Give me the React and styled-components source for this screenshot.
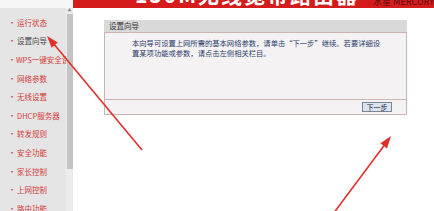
import React from "react";
import styled, { createGlobalStyle } from "styled-components";

const GlobalStyle = createGlobalStyle`
  html, body {
    margin: 0;
    padding: 0;
    width: 434px;
    height: 211px;
    overflow: hidden;
    background: #fff;
    font-family: "Noto Sans CJK SC", "Liberation Sans", sans-serif;
  }
`;

const menu = [
  { label: "运行状态" },
  { label: "设置向导", active: true },
  { label: "WPS一键安全设定" },
  { label: "网络参数" },
  { label: "无线设置" },
  { label: "DHCP服务器" },
  { label: "转发规则" },
  { label: "安全功能" },
  { label: "家长控制" },
  { label: "上网控制" },
  { label: "路由功能" },
];

const App = () => {
  return (
    <Page>
      <GlobalStyle />
      <TopRow>
        <TopLeft />
        <Banner>
          <Title>150M无线宽带路由器</Title>
          <Brand>水星 MERCURY</Brand>
        </Banner>
      </TopRow>
      <Body>
        <Sidebar>
          {menu.map((m) => (
            <MenuItem key={m.label} $active={m.active}>
              <Dot>•</Dot>
              {m.label}
            </MenuItem>
          ))}
        </Sidebar>
        <ScrollTrack>
          <ScrollArrow>▲</ScrollArrow>
          <ScrollThumb />
        </ScrollTrack>
        <Main>
          <Panel>
            <PanelHead>设置向导</PanelHead>
            <PanelBody>
              本向导可设置上网所需的基本网络参数，请单击“下一步”继续。若要详细设
              <br />
              置某项功能或参数，请点击左侧相关栏目。
            </PanelBody>
            <PanelFoot>
              <NextButton>下一步</NextButton>
            </PanelFoot>
          </Panel>
        </Main>
      </Body>
      <Arrows width="434" height="211" viewBox="0 0 434 211">
        <line x1="142" y1="150" x2="53" y2="43" stroke="#e0302c" strokeWidth="1.6" />
        <polygon points="47,36 57.8,42.6 51.6,47.8" fill="#e0302c" />
        <line x1="333" y1="214" x2="386" y2="143" stroke="#e0302c" strokeWidth="1.6" />
        <polygon points="391,136 387,148.5 380.4,143.2" fill="#e0302c" />
      </Arrows>
    </Page>
  );
};

const Page = styled.div`
  position: relative;
  width: 434px;
  height: 211px;
  display: flex;
  flex-direction: column;
  overflow: hidden;
`;

const TopRow = styled.div`
  display: flex;
  height: 8px;
  flex-shrink: 0;
`;

const TopLeft = styled.div`
  width: 73px;
  background: #f6f6f6;
`;

const Banner = styled.div`
  flex: 1;
  background: #d41c1c;
  display: flex;
  align-items: flex-start;
  overflow: hidden;
`;

const Title = styled.div`
  margin-left: 62px;
  margin-top: -18px;
  font-size: 21px;
  line-height: 24px;
  letter-spacing: 2px;
  font-weight: bold;
  color: #fff;
  white-space: nowrap;
`;

const Brand = styled.div`
  margin-left: 14px;
  margin-top: -3px;
  font-size: 9px;
  line-height: 10px;
  color: #5a0b0b;
  white-space: nowrap;
`;

const Body = styled.div`
  flex: 1;
  display: flex;
`;

const Sidebar = styled.div`
  width: 66px;
  background: #e5e5e5;
  padding-top: 5px;
  box-sizing: border-box;
  overflow: hidden;
`;

const MenuItem = styled.div`
  display: flex;
  align-items: center;
  height: 18.6px;
  font-size: 7.5px;
  white-space: nowrap;
  color: ${(p) => (p.$active ? "#444" : "#d33a3a")};
`;

const Dot = styled.span`
  width: 17px;
  padding-left: 8px;
  box-sizing: border-box;
  color: #d33a3a;
  font-size: 8px;
`;

const ScrollTrack = styled.div`
  position: relative;
  width: 7px;
  background: #ececec;
  display: flex;
  flex-direction: column;
  align-items: center;
`;

const ScrollArrow = styled.div`
  font-size: 4px;
  line-height: 5px;
  height: 6px;
  color: #888;
`;

const ScrollThumb = styled.div`
  width: 6px;
  height: 155px;
  background: #c4c4c4;
`;

const Main = styled.div`
  flex: 1;
  background: #fff;
  padding: 12px 0 0 31px;
`;

const Panel = styled.div`
  width: 303px;
`;

const PanelHead = styled.div`
  height: 12px;
  background: #d9d9d9;
  font-size: 7.5px;
  line-height: 12px;
  color: #333;
  padding-left: 5px;
`;

const PanelBody = styled.div`
  height: 67px;
  box-sizing: border-box;
  border: 1px solid #cdb3b3;
  border-bottom: none;
  background: #f4f2f2;
  padding: 5px 0 0 27px;
  font-size: 7.3px;
  line-height: 10px;
  color: #2a3a6a;
  white-space: nowrap;
`;

const PanelFoot = styled.div`
  height: 16px;
  box-sizing: border-box;
  border: 1px solid #cdb3b3;
  background: #f4f2f2;
  display: flex;
  justify-content: flex-end;
  align-items: center;
  padding-right: 14px;
`;

const NextButton = styled.div`
  width: 30px;
  height: 10px;
  box-sizing: border-box;
  border: 1px solid #7a8594;
  background: #dbe5f1;
  font-size: 7px;
  line-height: 8px;
  text-align: center;
  color: #223;
`;

const Arrows = styled.svg`
  position: absolute;
  left: 0;
  top: 0;
  pointer-events: none;
`;

export default App;
